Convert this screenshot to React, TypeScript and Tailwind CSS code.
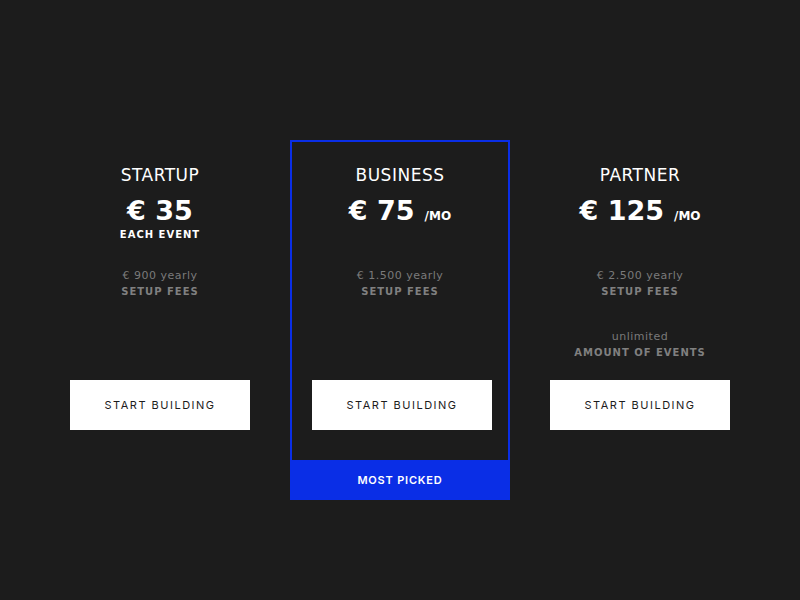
const plans = [
  {
    name: "STARTUP",
    price: "€ 35",
    per: "",
    note: "EACH EVENT",
    yearly: "€ 900 yearly",
    extra: false,
    featured: false,
  },
  {
    name: "BUSINESS",
    price: "€ 75",
    per: "/MO",
    note: "",
    yearly: "€ 1.500 yearly",
    extra: false,
    featured: true,
  },
  {
    name: "PARTNER",
    price: "€ 125",
    per: "/MO",
    note: "",
    yearly: "€ 2.500 yearly",
    extra: true,
    featured: false,
  },
];

export default function App() {
  return (
    <div
      className="flex h-[600px] w-[800px] items-start justify-center gap-5 bg-[#1c1c1c] pt-[140px]"
      style={{ fontFamily: '"DejaVu Sans", "Liberation Sans", sans-serif' }}
    >
      {plans.map((p) => (
        <div key={p.name} className="flex w-[220px] flex-col">
          <div
            className={
              "flex h-[320px] flex-col items-center border-2 border-b-0 pt-[23px] pb-[30px] " +
              (p.featured ? "border-[#0a2ee6]" : "border-transparent")
            }
          >
            <h2 className="text-[17px] leading-[20px] tracking-[0.5px] text-white">
              {p.name}
            </h2>
            <div className="mt-[11px] flex items-end text-white">
              <span className="text-[27px] leading-[30px] font-bold">{p.price}</span>
              {p.per && (
                <span className="mb-[3px] ml-[10px] text-[12px] leading-[14px] font-bold">
                  {p.per}
                </span>
              )}
            </div>
            <div className="mt-[2px] h-[14px] text-[10px] leading-[14px] font-bold tracking-[1px] text-white">
              {p.note}
            </div>
            <div className="mt-[27px] text-[11px] leading-[14px] tracking-[0.5px] text-[#7a7a7a]">
              {p.yearly}
            </div>
            <div className="mt-[2px] text-[10px] leading-[14px] font-bold tracking-[1px] text-[#808080]">
              SETUP FEES
            </div>
            {p.extra && (
              <>
                <div className="mt-[31px] text-[11px] leading-[14px] tracking-[0.5px] text-[#7a7a7a]">
                  unlimited
                </div>
                <div className="mt-[2px] text-[10px] leading-[14px] font-bold tracking-[1px] text-[#808080]">
                  AMOUNT OF EVENTS
                </div>
              </>
            )}
            <button
              className={
                "mt-auto flex h-[50px] w-[180px] items-center justify-center bg-white pt-[1px] text-[11px] tracking-[1.5px] text-[#1c1c1c] " +
                (p.featured ? "ml-[4px]" : "")
              }
              style={{ fontFamily: 'Inter, "Liberation Sans", sans-serif' }}
            >
              START BUILDING
            </button>
          </div>
          {p.featured && (
            <div
              className="flex h-[40px] items-center justify-center bg-[#0a2ee6] pt-[1px] text-[11px] font-semibold tracking-[0.8px] text-white"
              style={{ fontFamily: 'Inter, "Liberation Sans", sans-serif' }}
            >
              MOST PICKED
            </div>
          )}
        </div>
      ))}
    </div>
  );
}
